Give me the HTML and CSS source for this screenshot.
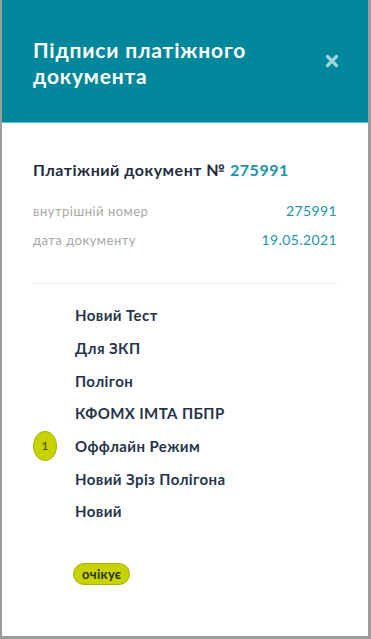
FILE: index.html
```html
<!DOCTYPE html>
<html lang="uk">
<head>
<meta charset="utf-8">
<link rel="stylesheet" href="styles.css">
</head>
<body>
<div class="frame">
  <header class="head">
    <h1 class="title">Підписи платіжного документа</h1>
    <button class="close" aria-label="close">
      <svg width="14" height="14" viewBox="0 0 14 14"><path d="M2.5 2.5 L11.5 11.5 M11.5 2.5 L2.5 11.5" stroke="#9fd6de" stroke-width="3.2" stroke-linecap="round"/></svg>
    </button>
  </header>
  <div class="bottomline"></div>
  <main class="content">
    <div class="doc">Платіжний документ № <span class="num">275991</span></div>
    <div class="row"><span class="lbl">внутрішній номер</span><span class="val">275991</span></div>
    <div class="row second"><span class="lbl">дата документу</span><span class="val">19.05.2021</span></div>
    <div class="divider"></div>
    <ul class="list">
      <li class="item"><span class="mark"></span><span class="name">Новий Тест</span></li>
      <li class="item"><span class="mark"></span><span class="name">Для ЗКП</span></li>
      <li class="item"><span class="mark"></span><span class="name">Полігон</span></li>
      <li class="item"><span class="mark"></span><span class="name">КФОМХ ІМТА ПБПР</span></li>
      <li class="item"><span class="mark"><span class="badge">1</span></span><span class="name">Оффлайн Режим</span></li>
      <li class="item"><span class="mark"></span><span class="name">Новий Зріз Полігона</span></li>
      <li class="item"><span class="mark"></span><span class="name">Новий</span></li>
    </ul>
    <div class="status"><span class="pill">очікує</span></div>
  </main>
</div>
</body>
</html>
```
FILE: styles.css
```css
* { box-sizing: border-box; }
html, body { margin: 0; padding: 0; background: #ffffff; }
body { font-family: Lato, "Noto Sans", sans-serif; }
.frame {
  width: 371px;
  height: 639px;
  border-left: 2px solid #9c9c9c;
  border-right: 3px solid #9c9c9c;
  border-bottom: 3px solid #9c9c9c;
  background: #fff;
  overflow: hidden;
}
.head {
  height: 122px;
  background: #00879b;
  display: flex;
  align-items: flex-start;
  justify-content: space-between;
  padding: 37px 29px 0 31px;
}
.bottomline { height: 1px; background: #5fbcc9; }
.title {
  margin: 0;
  color: #ffffff;
  font-size: 21px;
  line-height: 26px;
  font-weight: 700;
  letter-spacing: 0.8px;
  width: 250px;
}
.close {
  border: 0;
  background: transparent;
  padding: 0;
  margin-top: 17px;
  width: 14px;
  height: 14px;
  display: flex;
}
.content { padding: 37px 31px 0 31px; }
.doc {
  font-size: 16px;
  line-height: 20px;
  font-weight: 700;
  color: #1f2d41;
  letter-spacing: 0.5px;
}
.num { color: #1a94a7; }
.row {
  display: flex;
  justify-content: space-between;
  align-items: baseline;
  line-height: 20px;
  margin-top: 21px;
}
.row.second { margin-top: 9px; }
.lbl { color: #a6a6a6; font-size: 13px; letter-spacing: 0.5px; }
.val { color: #2196a8; font-size: 14px; letter-spacing: 0.4px; }
.divider { height: 1px; background: #ececec; margin-top: 33px; }
.list { list-style: none; margin: 15px 0 0 0; padding: 0; }
.item {
  display: grid;
  grid-template-columns: 42px 1fr;
  align-items: center;
  height: 32.67px;
}
.mark { display: flex; align-items: center; }
.name {
  font-size: 15px;
  font-weight: 700;
  color: #26344a;
  letter-spacing: 0.4px;
}
.badge {
  width: 24px;
  height: 30px;
  border-radius: 12px / 15px;
  background: #c6d300;
  border: 1px solid #aab400;
  color: #3a4200;
  font-size: 12px;
  display: flex;
  align-items: center;
  justify-content: center;
}
.status { margin-top: 35px; padding-left: 40px; }
.pill {
  display: inline-block;
  height: 22px;
  line-height: 20px;
  padding: 0 8px;
  border-radius: 11px;
  background: #c6d300;
  border: 1px solid #aab400;
  color: #2a3310;
  font-size: 13px;
  font-weight: 700;
  letter-spacing: 0.3px;
}
```
